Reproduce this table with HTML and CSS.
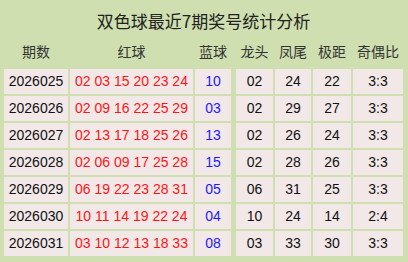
FILE: index.html
```html
<!DOCTYPE html>
<html>
<head>
<meta charset="utf-8">
<link rel="stylesheet" href="styles.css">
</head>
<body>
<div class="panel">
  <div class="title">双色球最近7期奖号统计分析</div>
  <div class="grid">
    <div class="hd">期数</div><div class="hd">红球</div><div class="hd">蓝球</div><div class="hd">龙头</div><div class="hd">凤尾</div><div class="hd">极距</div><div class="hd">奇偶比</div>

    <div class="c">2026025</div><div class="c red">02 03 15 20 23 24</div><div class="c blue">10</div><div class="c">02</div><div class="c">24</div><div class="c">22</div><div class="c">3:3</div>
    <div class="c">2026026</div><div class="c red">02 09 16 22 25 29</div><div class="c blue">03</div><div class="c">02</div><div class="c">29</div><div class="c">27</div><div class="c">3:3</div>
    <div class="c">2026027</div><div class="c red">02 13 17 18 25 26</div><div class="c blue">13</div><div class="c">02</div><div class="c">26</div><div class="c">24</div><div class="c">3:3</div>
    <div class="c">2026028</div><div class="c red">02 06 09 17 25 28</div><div class="c blue">15</div><div class="c">02</div><div class="c">28</div><div class="c">26</div><div class="c">3:3</div>
    <div class="c">2026029</div><div class="c red">06 19 22 23 28 31</div><div class="c blue">05</div><div class="c">06</div><div class="c">31</div><div class="c">25</div><div class="c">3:3</div>
    <div class="c">2026030</div><div class="c red">10 11 14 19 22 24</div><div class="c blue">04</div><div class="c">10</div><div class="c">24</div><div class="c">14</div><div class="c">2:4</div>
    <div class="c">2026031</div><div class="c red">03 10 12 13 18 33</div><div class="c blue">08</div><div class="c">03</div><div class="c">33</div><div class="c">30</div><div class="c">3:3</div>
  </div>
</div>
</body>
</html>
```

FILE: styles.css
```css
html, body {
  margin: 0;
  padding: 0;
  background: #cfdfb0;
}
.panel {
  width: 408px;
  height: 262px;
  box-sizing: border-box;
  padding: 0 5px 6px 4px;
  background: #cfdfb0;
  font-family: "Liberation Sans", "Noto Sans CJK SC", sans-serif;
}
.title {
  height: 40px;
  line-height: 42px;
  text-align: center;
  font-family: "Noto Sans CJK SC", sans-serif;
  font-size: 17px;
  color: #222;
}
.grid {
  display: grid;
  grid-template-columns: 64px 123px 39px 37px 36px 38px 50px;
  grid-template-rows: 27px repeat(7, 25px);
  column-gap: 2px;
  row-gap: 2px;
}
.grid > :nth-child(7n+3) {
  width: 36px;
  justify-self: start;
}
.hd {
  font-family: "Noto Sans CJK SC", sans-serif;
  font-size: 14px;
  color: #333;
  text-align: center;
  line-height: 27px;
  margin-top: -2px;
}
.c {
  background: #f2e8e8;
  font-size: 14px;
  line-height: 25px;
  text-align: center;
  color: #111;
}
.red { color: #ff1414; }
.blue { color: #1a1aff; }
```
